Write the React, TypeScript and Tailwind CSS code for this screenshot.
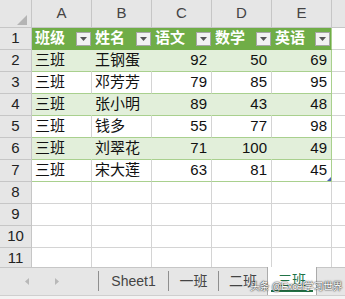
import React from "react";

const cols = ["A", "B", "C", "D", "E"];
const heads = ["班级", "姓名", "语文", "数学", "英语"];
const data: (string | number)[][] = [
  ["三班", "王钢蛋", 92, 50, 69],
  ["三班", "邓芳芳", 79, 85, 95],
  ["三班", "张小明", 89, 43, 48],
  ["三班", "钱多", 55, 77, 98],
  ["三班", "刘翠花", 71, 100, 49],
  ["三班", "宋大莲", 63, 81, 45],
];

const FONT = { fontFamily: '"Liberation Sans", "Noto Sans CJK SC", sans-serif' };

function RowHead({ n }: { n: number }) {
  return (
    <div className="w-[32px] shrink-0 h-full bg-[#e6e6e6] border-r border-b border-[#c6c6c6] flex items-center justify-center text-[15px] text-[#222]">
      {n}
    </div>
  );
}

function Dropdown() {
  return (
    <div className="w-[15px] h-[14px] mr-[1px] bg-[#f2f2f2] border border-[#a6a6a6] flex items-center justify-center">
      <svg width="7" height="4" viewBox="0 0 7 4">
        <polygon points="0,0 7,0 3.5,4" fill="#555" />
      </svg>
    </div>
  );
}

export default function App() {
  return (
    <div className="w-[345px] h-[299px] flex flex-col overflow-hidden bg-white relative" style={FONT}>
      <div className="flex-1 overflow-hidden">
        {/* column header */}
        <div className="flex h-[28px]">
          <div className="w-[32px] shrink-0 bg-[#e6e6e6] border-r border-b border-[#c6c6c6] relative">
            <svg className="absolute right-[4px] bottom-[2px]" width="10" height="10" viewBox="0 0 10 10">
              <polygon points="10,0 10,10 0,10" fill="#b4b4b4" />
            </svg>
          </div>
          {cols.map((c) => (
            <div
              key={c}
              className="w-[60px] shrink-0 bg-[#e6e6e6] border-r border-b border-[#c6c6c6] flex items-center justify-center text-[15px] text-[#444]"
            >
              {c}
            </div>
          ))}
          <div className="flex-1 bg-[#e6e6e6] border-b border-[#c6c6c6]" />
        </div>

        {/* row 1 header */}
        <div className="flex h-[22px]">
          <RowHead n={1} />
          {heads.map((h, i) => (
            <div
              key={h}
              className={`w-[60px] shrink-0 bg-[#70ad47] border-b border-[#70ad47] flex items-center justify-between pl-[3px] text-white font-bold text-[15px] ${
                i === 4 ? "border-r border-r-[#a9d08e]" : ""
              }`}
            >
              <span>{h}</span>
              <Dropdown />
            </div>
          ))}
          <div className="flex-1 border-b border-[#d4d4d4]" />
        </div>

        {data.map((row, r) => {
          const green = r % 2 === 0;
          return (
            <div key={r} className="flex h-[22px]">
              <RowHead n={r + 2} />
              {row.map((v, i) => (
                <div
                  key={i}
                  className={`w-[60px] shrink-0 relative border-b border-r border-b-[#a9d08e] flex items-center text-[15px] text-[#111] ${
                    green ? "bg-[#e2efda]" : "bg-white"
                  } ${
                    i === 4
                      ? "border-r-[#a9d08e]"
                      : green
                      ? "border-r-[#e2efda]"
                      : "border-r-[#d4d4d4]"
                  } ${typeof v === "number" ? "justify-end pr-[4px]" : "justify-start pl-[3px]"}`}
                >
                  {v}
                  {r === 5 && i === 4 && (
                    <svg className="absolute right-0 bottom-0" width="4" height="4" viewBox="0 0 4 4">
                      <polygon points="4,0 4,4 0,4" fill="#4a5fb5" />
                    </svg>
                  )}
                </div>
              ))}
              <div className="flex-1 border-b border-[#d4d4d4]" />
            </div>
          );
        })}

        {[8, 9, 10, 11].map((n) => (
          <div key={n} className="flex h-[22px]">
            <RowHead n={n} />
            {cols.map((c) => (
              <div key={c} className="w-[60px] shrink-0 border-r border-b border-[#d4d4d4]" />
            ))}
            <div className="flex-1 border-b border-[#d4d4d4]" />
          </div>
        ))}
      </div>

      {/* tab bar */}
      <div className="h-[28px] shrink-0 flex bg-[#e6e6e6] border-t border-[#c6c6c6] text-[#444]">
        <div className="w-[98px] flex items-center">
          <svg className="ml-[25px]" width="4" height="7" viewBox="0 0 4 7">
            <polygon points="4,0 4,7 0,3.5" fill="#b8b8b8" />
          </svg>
          <svg className="ml-[26px]" width="4" height="7" viewBox="0 0 4 7">
            <polygon points="0,0 0,7 4,3.5" fill="#b8b8b8" />
          </svg>
        </div>
        <div className="w-px bg-[#8f8f8f] my-[3px] mb-[4px]" />
        <div className="w-[69px] flex items-center justify-center text-[14px]">Sheet1</div>
        <div className="w-px bg-[#8f8f8f] my-[3px] mb-[4px]" />
        <div className="w-[49px] flex items-center justify-center text-[14px]">一班</div>
        <div className="w-px bg-[#8f8f8f] my-[3px] mb-[4px]" />
        <div className="w-[48px] flex items-center justify-center text-[14px]">二班</div>
        <div className="w-[50px] -mt-px bg-white border-l border-r border-[#ababab] flex flex-col items-center justify-center relative">
          <span className="text-[14px] text-[#217346] -mt-[2px]">三班</span>
          <div className="absolute left-[3px] right-[3px] bottom-[3px] h-[2px] bg-[#217346]" />
        </div>
        <div className="flex-1" />
      </div>
      <div className="h-[4px] shrink-0 bg-[#f3f3f3] border-t border-[#cfcfcf]" />

      <div className="absolute left-[250px] top-[282px] text-[10px] tracking-[-0.4px] text-white leading-none whitespace-nowrap [text-shadow:0_0_2px_#333,0_0_1px_#000]">
        头条 @Excel学习世界
      </div>
    </div>
  );
}
